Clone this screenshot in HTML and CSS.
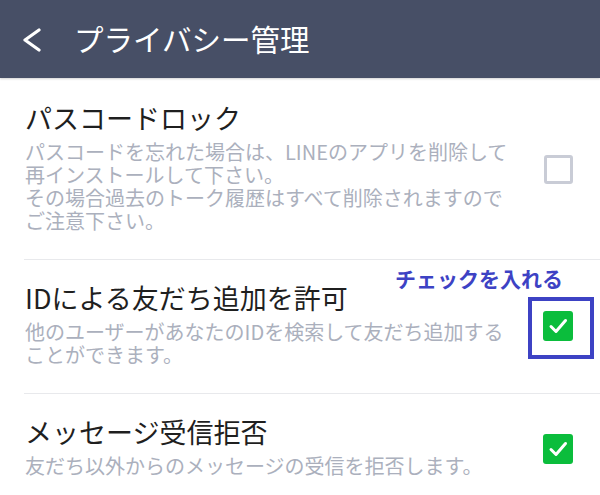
FILE: index.html
```html
<!DOCTYPE html>
<html lang="ja">
<head>
<meta charset="utf-8">
<link rel="stylesheet" href="styles.css">
</head>
<body>
<header class="appbar">
  <svg class="back" width="20" height="24" viewBox="0 0 20 24" aria-hidden="true">
    <polyline points="17,2 3,12 17,22" fill="none" stroke="#ffffff" stroke-width="3.2" stroke-linecap="round" stroke-linejoin="round"/>
  </svg>
  <h1 class="appbar-title">プライバシー管理</h1>
</header>
<ul class="settings">
  <li class="row">
    <div class="text">
      <div class="title">パスコードロック</div>
      <div class="desc">パスコードを忘れた場合は、LINEのアプリを削除して<br>再インストールして下さい。<br>その場合過去のトーク履歴はすべて削除されますので<br>ご注意下さい。</div>
    </div>
    <span class="box"></span>
  </li>
  <li class="row">
    <span class="note">チェックを入れる</span>
    <div class="text">
      <div class="title">IDによる友だち追加を許可</div>
      <div class="desc">他のユーザーがあなたのIDを検索して友だち追加する<br>ことができます。</div>
    </div>
    <span class="box checked highlighted">
      <svg width="30" height="30" viewBox="0 0 30 30" aria-hidden="true"><polyline points="8,15.5 13,20.5 22.5,9.5" fill="none" stroke="#fff" stroke-width="3" stroke-linecap="round" stroke-linejoin="round"/></svg>
    </span>
  </li>
  <li class="row">
    <div class="text">
      <div class="title">メッセージ受信拒否</div>
      <div class="desc">友だち以外からのメッセージの受信を拒否します。</div>
    </div>
    <span class="box checked">
      <svg width="30" height="30" viewBox="0 0 30 30" aria-hidden="true"><polyline points="8,15.5 13,20.5 22.5,9.5" fill="none" stroke="#fff" stroke-width="3" stroke-linecap="round" stroke-linejoin="round"/></svg>
    </span>
  </li>
</ul>
</body>
</html>
```
FILE: styles.css
```css
* { box-sizing: border-box; }
html, body {
  margin: 0;
  padding: 0;
  background: #ffffff;
  font-family: "Noto Sans CJK JP", "Noto Sans", sans-serif;
}
body { width: 600px; height: 495px; overflow: hidden; }

.appbar {
  height: 78px;
  background: #474f66;
  display: flex;
  align-items: center;
  padding-left: 22px;
  box-shadow: 0 1px 2px rgba(0, 0, 0, 0.18);
  position: relative;
  z-index: 1;
}
.back { flex: none; margin-top: 2px; }
.appbar-title {
  margin: 0 0 0 32px;
  font-size: 29.5px;
  font-weight: 400;
  color: #ffffff;
  line-height: 1;
}

.settings {
  list-style: none;
  margin: 2px 0 0 0;
  padding: 0 0 0 24px;
}
.row {
  position: relative;
  display: flex;
  align-items: center;
  padding: 20px 27px 27.5px 1px;
  border-bottom: 1px solid #e8e9ec;
}
.text { flex: 1; }
.title {
  font-size: 27px;
  line-height: 36px;
  color: #1f1f1f;
}
.desc {
  margin-top: 3.5px;
  font-size: 20px;
  line-height: 23px;
  color: #abb0bd;
}

.box {
  position: relative;
  flex: none;
  width: 29px;
  height: 29px;
  margin-top: 7px;
  border: 3px solid #c9ccd6;
  border-radius: 3px;
}
.box.checked {
  width: 30px;
  height: 30px;
  border: none;
  background: #0bbd3c;
}
.box svg { display: block; }
.highlighted::after {
  content: "";
  position: absolute;
  left: -15px;
  top: -14px;
  width: 58px;
  height: 54px;
  border: 4px solid #3d42c4;
}
.note {
  position: absolute;
  right: 37px;
  top: 4px;
  font-size: 21px;
  font-weight: 700;
  line-height: 28px;
  color: #3d42c4;
}
```
